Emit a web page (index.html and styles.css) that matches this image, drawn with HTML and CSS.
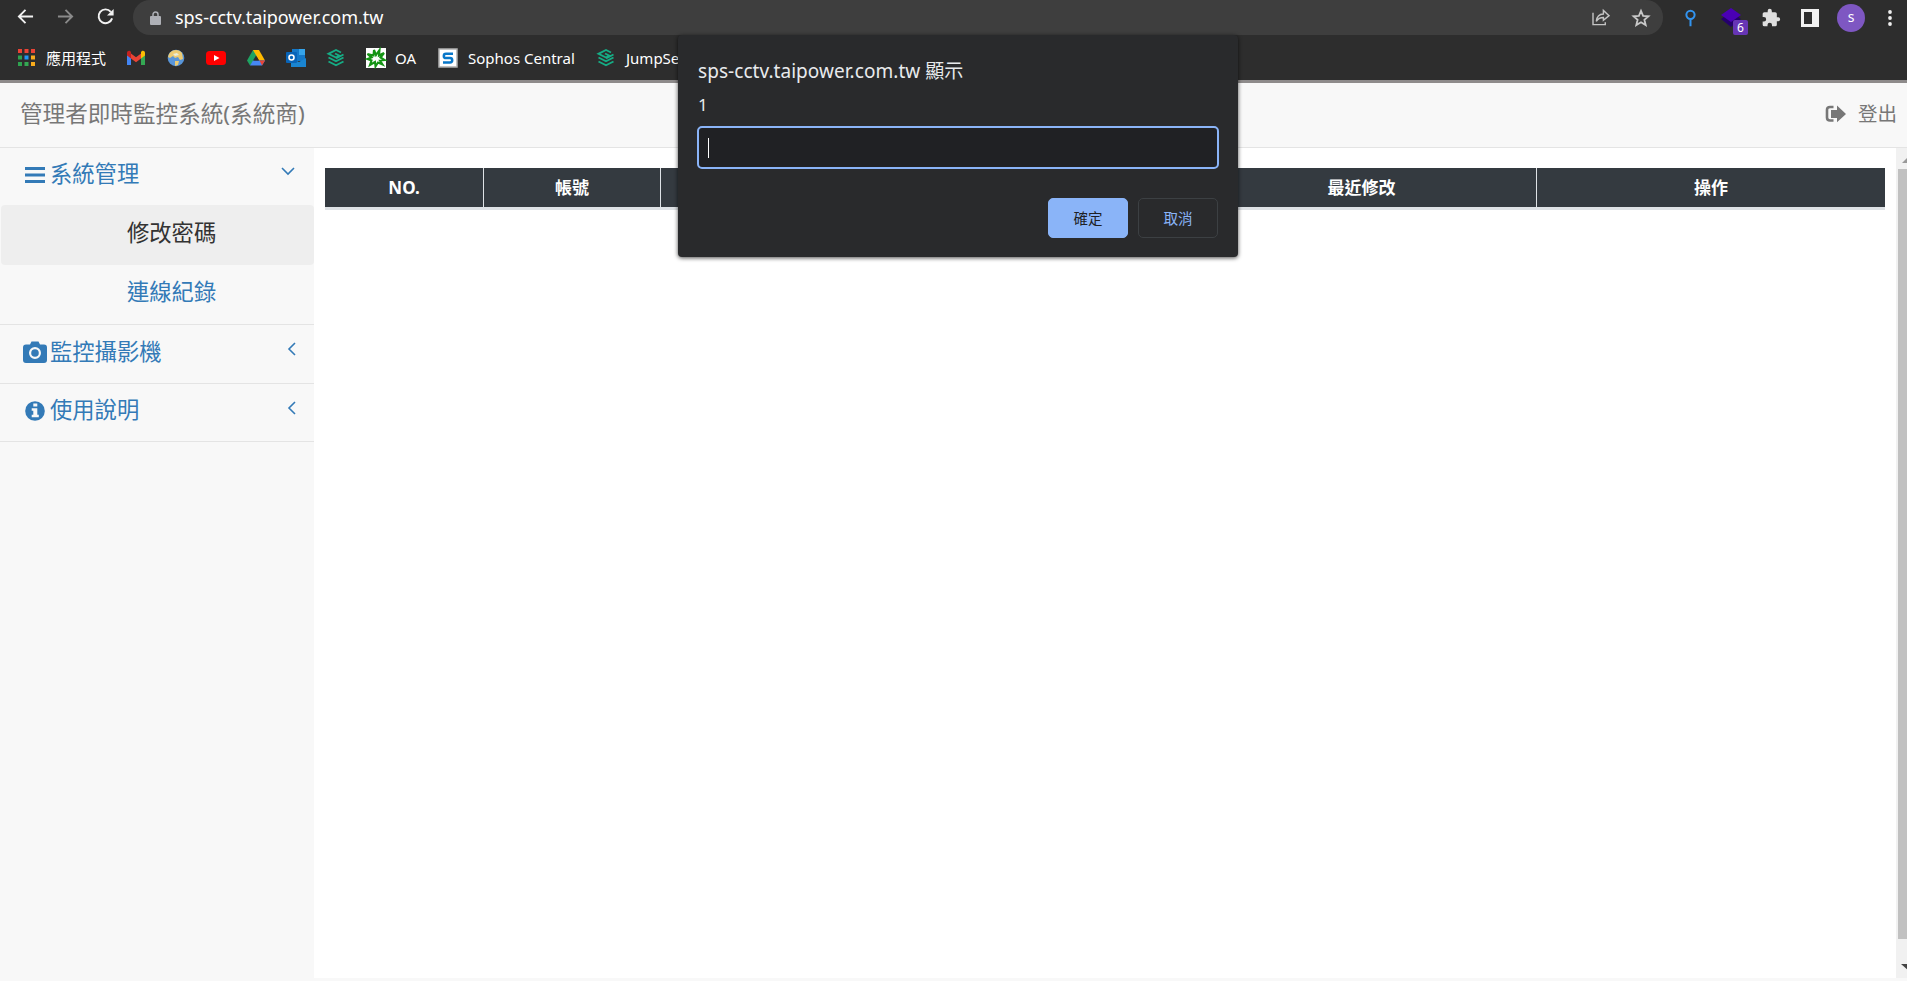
FILE: index.html
```html
<!DOCTYPE html>
<html lang="zh-Hant">
<head>
<meta charset="utf-8">
<title>sps-cctv.taipower.com.tw</title>
<link rel="stylesheet" href="styles.css">
</head>
<body>
<header class="chrome">
  <div class="toolbar">
    <svg class="nav-icon" viewBox="0 0 18 18"><path d="M17 9H2M9 2L2 9l7 7" fill="none" stroke="#f1f1f1" stroke-width="2"/></svg>
    <svg class="nav-icon" viewBox="0 0 18 18"><path d="M1 9h15M9 2l7 7-7 7" fill="none" stroke="#8a8a8a" stroke-width="2"/></svg>
    <svg class="nav-icon" viewBox="0 0 18 18"><path d="M14.6 4A7.3 7.3 0 1 0 16 11" fill="none" stroke="#f1f1f1" stroke-width="2.1"/><path d="M17.6 1v7h-7z" fill="#f1f1f1"/></svg>
    <div class="omnibox">
      <svg class="lock" viewBox="0 0 11 14"><path d="M3 6V3.6a2.5 2.5 0 0 1 5 0V6" fill="none" stroke="#aeb0b6" stroke-width="1.5"/><rect y="5" width="11" height="9" rx="1" fill="#aeb0b6"/></svg>
      <span class="url">sps-cctv.taipower.com.tw</span>
      <svg class="share" viewBox="0 0 20 18"><path d="M1 4v12.500h13V14M4.500 13C5 8 8 5.500 12 5.300V1.500l6 5.500-6 5V9c-3 0-5.500 1-7.500 4z" fill="none" stroke="#c4c4c4" stroke-width="1.500"/></svg>
      <svg class="star" viewBox="0 0 18 18"><path d="M9 1.800l2.100 5 5.400.5-4.100 3.500 1.300 5.300L9 13.200l-4.700 2.900 1.300-5.300-4.100-3.500 5.400-.5z" fill="none" stroke="#c8c8c8" stroke-width="1.800"/></svg>
    </div>
    <div class="extensions">
      <svg class="pin" viewBox="0 0 12 18"><circle cx="6" cy="5.500" r="4.500" fill="none" stroke="#3294f0" stroke-width="2.200"/><path d="M6 10v8" stroke="#3294f0" stroke-width="2.200"/></svg>
      <div class="layers"><svg viewBox="0 0 20 20"><path d="M0 11l10-7 10 7-10 8z" fill="#24006b"/><path d="M0 7l10-7 10 7-10 7z" fill="#4a00b4"/></svg><span class="count">6</span></div>
      <svg class="puzzle" viewBox="0 0 24 24"><path d="M20.500 11H19V7a2 2 0 0 0-2-2h-4V3.500a2.500 2.500 0 0 0-5 0V5H4a2 2 0 0 0-2 2v3.800h1.500a2.700 2.700 0 0 1 0 5.400H2V20a2 2 0 0 0 2 2h3.800v-1.500a2.700 2.700 0 0 1 5.400 0V22H17a2 2 0 0 0 2-2v-4h1.500a2.500 2.500 0 0 0 0-5z" fill="#dedede"/></svg>
      <svg class="panel" viewBox="0 0 18 18"><path d="M0 0h18v18H0zM3 3v12h8V3z" fill="#f1f1f1" fill-rule="evenodd"/></svg>
      <span class="avatar">s</span>
      <svg class="dots" viewBox="0 0 4 16"><circle cx="2" cy="2" r="1.900" fill="#eee"/><circle cx="2" cy="8" r="1.900" fill="#eee"/><circle cx="2" cy="14" r="1.900" fill="#eee"/></svg>
    </div>
  </div>
  <nav class="bookmarks">
    <svg class="apps" viewBox="0 0 17 17"><path d="M0 0h4v4H0zM6.500 0h4v4h-4zM13 0h4v4h-4z" fill="#ea4335"/><path d="M0 6.500h4v4H0zM0 13h4v4H0z" fill="#2ea24f"/><path d="M6.500 6.500h4v4h-4z" fill="#2196f3"/><path d="M6.500 13h4v4h-4z" fill="#34a853"/><path d="M13 6.500h4v4h-4zM13 13h4v4h-4z" fill="#f9ab1c"/></svg>
    <span class="bm-text apps-label">應用程式</span>
    <svg class="bm bm-gmail" viewBox="0 0 20 20"><path d="M1 5v12h4V8z" fill="#4285f4"/><path d="M19 5v12h-4V8z" fill="#34a853"/><path d="M5 5.500v5l5 3.800 5-3.800v-5l-5 3.800z" fill="#ea4335"/><path d="M1 5c0-2 2-2.700 3.300-1.700L5 4v6.500L1 7.500z" fill="#c5221f"/><path d="M19 5c0-2-2-2.700-3.300-1.700L15 4v6.500l4-3z" fill="#fbbc04"/></svg>
    <svg class="bm bm-globe" viewBox="0 0 20 20"><circle cx="10" cy="10" r="8.300" fill="#5895d9"/><path d="M3 6c3-5 10-5 13-1l1 6-3 1-2-3-3 1-2-2-3 2-2-1zM9 13h4l-1 4-3 1z" fill="#eccb73"/><path d="M7 6l4-1 2 2-4 1z" fill="#e8eddc"/></svg>
    <svg class="bm bm-youtube" viewBox="0 0 20 20"><rect y="3" width="20" height="14" rx="3.500" fill="#f00"/><path d="M8 7l5.500 3L8 13z" fill="#fff"/></svg>
    <svg class="bm bm-drive" viewBox="0 0 20 20"><path d="M7 2h3l2.500 5L4 17.500l-3-5z" fill="#1ea362"/><path d="M7 2h6l6 10.500h-6z" fill="#ffba00"/><path d="M7 12.500h12l-3 5H4z" fill="#4688f4"/><path d="M13.500 12.500H19l-3 5z" fill="#ea4335"/><path d="M10 7.500l3 5H7z" fill="#2d2d2d"/></svg>
    <svg class="bm bm-outlook" viewBox="0 0 20 20"><path d="M6 1h13v12H6z" fill="#1478c8"/><path d="M13 1h6v6h-6z" fill="#35a4ea"/><path d="M5 10l8 4 7-4v9H5z" fill="#1a85d1"/><rect y="4" width="11" height="11" rx="1" fill="#0864b8"/><circle cx="5.500" cy="9.500" r="2.500" fill="none" stroke="#fff" stroke-width="1.600"/></svg>
    <svg class="bm bm-stack" viewBox="0 0 20 20"><path d="M15 4.500L10 2 2.500 5.800 10 9.500l3.500-1.800L9 5.500M17.500 6.500L10 10.300M2.500 9.500l7.500 3.800 7.500-3.800M2.500 13.500l7.500 3.800 7.500-3.800" fill="none" stroke="#16ad85" stroke-width="1.900"/></svg>
    <svg class="bm bm-oa" viewBox="0 0 20 20"><path d="M0 0h20v20H0z" fill="#fff"/><path d="M8 2l2 5 3.500-5-.500 5.500L18 5l-3.500 4.500L18.500 12l-4.500.500 2.500 4-4.500-2-2.500 4-.500-4.500L4 17l1.500-4.500L1.500 11l4-1.500L1.500 6l6 1.500z" fill="none" stroke="#149414" stroke-width="2.100"/></svg>
    <span class="bm-text oa-label">OA</span>
    <svg class="bm bm-sophos" viewBox="0 0 20 20"><path d="M1 1h18v18H1z" fill="#fff" stroke="#b0b0b0" stroke-width="1.500"/><path d="M15 5.700H8Q5.800 5.700 5.800 7.900t2.200 2.200h4q2.200 0 2.200 2.200T12 14.500H5" fill="none" stroke="#0877c9" stroke-width="2.500"/></svg>
    <span class="bm-text sophos-label">Sophos Central</span>
    <svg class="bm bm-jump" viewBox="0 0 20 20"><path d="M15 4.500L10 2 2.500 5.800 10 9.500l3.500-1.800L9 5.500M17.500 6.500L10 10.300M2.500 9.500l7.500 3.800 7.500-3.800M2.500 13.500l7.500 3.800 7.500-3.800" fill="none" stroke="#16ad85" stroke-width="1.900"/></svg>
    <span class="bm-text jump-label">JumpServer</span>
  </nav>
</header>
<header class="site-header">
  <h1 class="brand">管理者即時監控系統(系統商)</h1>
  <a class="logout"><svg viewBox="0 0 22 18"><path d="M8.500 2H5Q2 2 2 5v7.500q0 3 3 3h3.500" fill="none" stroke="#777" stroke-width="2.600"/><path d="M6 5h6V.500L21 9l-9 8.300V13H6z" fill="#777"/></svg><span>登出</span></a>
</header>
<div class="layout">
  <aside class="sidebar">
    <a class="menu menu-open"><svg class="menu-icon" viewBox="0 0 24 24"><path d="M2 5.500h20M2 12h20M2 18.500h20" stroke="#337ab7" stroke-width="3.200"/></svg><span>系統管理</span><svg class="arrow arrow-down" viewBox="0 0 14 14"><path d="M1 4l6 6 6-6" fill="none" stroke="#337ab7" stroke-width="1.600"/></svg></a>
    <a class="sub sub-active">修改密碼</a>
    <a class="sub">連線紀錄</a>
    <a class="menu menu-camera"><svg class="menu-icon" viewBox="0 0 24 24"><path d="M3 4.500h4l1.500-3h7l1.500 3h4q3 0 3 3V20q0 3-3 3H3q-3 0-3-3V7.500q0-3 3-3zM12 7a6 6 0 1 0 0 12 6 6 0 0 0 0-12z" fill="#337ab7" fill-rule="evenodd"/><circle cx="12" cy="13" r="3.800" fill="#337ab7"/></svg><span>監控攝影機</span><svg class="arrow" viewBox="0 0 14 14"><path d="M10 1L4 7l6 6" fill="none" stroke="#337ab7" stroke-width="1.600"/></svg></a>
    <a class="menu menu-info"><svg class="menu-icon" viewBox="0 0 24 24"><circle cx="12" cy="12" r="9.800" fill="#337ab7"/><path d="M10.300 4.500h4v3h-4zM8.700 9.300h5.600v6.500h1.500v2.500H8.700v-2.500h1.600v-4H8.700z" fill="#f8f8f8"/></svg><span>使用說明</span><svg class="arrow" viewBox="0 0 14 14"><path d="M10 1L4 7l6 6" fill="none" stroke="#337ab7" stroke-width="1.600"/></svg></a>
  </aside>
  <main class="content">
    <table class="records">
      <colgroup><col class="c-no"><col class="c-user"><col class="c-hidden"><col class="c-date"><col class="c-action"></colgroup>
      <thead><tr><th>NO.</th><th>帳號</th><th></th><th>最近修改</th><th>操作</th></tr></thead>
    </table>
  </main>
  <div class="scrollbar">
    <div class="sb-button"><svg viewBox="0 0 11 21"><path d="M6 15l6-6v6z" fill="#999"/></svg></div>
    <div class="sb-thumb"></div>
    <div class="sb-button sb-bottom"><svg viewBox="0 0 11 39"><path d="M5 25h8v7z" fill="#444"/></svg></div>
  </div>
</div>
<div class="dialog">
  <h2 class="dialog-title">sps-cctv.taipower.com.tw 顯示</h2>
  <p class="dialog-message">1</p>
  <div class="prompt"><span class="caret"></span></div>
  <div class="actions"><button class="btn btn-ok">確定</button><button class="btn btn-cancel">取消</button></div>
</div>
</body>
</html>
```
FILE: styles.css
```css
* { box-sizing: border-box; }
body { margin: 0; width: 1907px; height: 981px; overflow: hidden; display: flex; flex-direction: column; position: relative; background: #f8f8f8; font-family: "Noto Sans", "Noto Sans CJK TC", sans-serif; }
svg { display: block; flex: none; overflow: visible; }

.chrome { flex: none; height: 83px; background: #2d2d2d; border-bottom: 3px solid #8e8b8b; color: #fff; }
.toolbar { height: 35px; display: flex; align-items: flex-start; padding-left: 17px; }
.nav-icon { width: 17px; height: 17px; margin: 8px 23px 0 0; }
.omnibox { width: 1530px; height: 35px; margin-left: -4px; padding: 0 13px 0 17px; border-radius: 17px; background: #3e3e3e; display: flex; align-items: center; }
.lock { width: 11px; height: 14px; }
.url { margin: 0 auto 2px 14px; font-size: 18px; line-height: 24px; letter-spacing: -0.050px; }
.share { width: 19px; height: 17px; margin-right: 21px; }
.star { width: 18px; height: 18px; }
.extensions { display: flex; align-items: center; height: 35px; }
.pin { width: 11px; height: 18px; margin-left: 22px; }
.layers { position: relative; width: 20px; height: 20px; margin-left: 25px; }
.count { position: absolute; left: 12px; top: 12px; width: 15px; height: 15px; border-radius: 2px; background: #6735b5; font-size: 12px; line-height: 15px; text-align: center; }
.puzzle { width: 20px; height: 20px; margin-left: 20px; }
.panel { width: 18px; height: 18px; margin-left: 20px; }
.avatar { width: 28px; height: 28px; margin-left: 18px; border-radius: 50%; background: #7e57c2; font-size: 14px; line-height: 26px; text-align: center; }
.dots { width: 4px; height: 16px; margin-left: 23px; }

.bookmarks { height: 45px; display: flex; align-items: center; padding-left: 18px; }
.bm { width: 20px; height: 20px; }
.apps { width: 17px; height: 17px; }
.bm-text { font-size: 15px; line-height: 20px; white-space: nowrap; }
.apps-label { width: 60px; margin: 0 20px 0 11px; }
.bm-globe, .bm-youtube, .bm-drive, .bm-outlook, .bm-stack, .bm-oa { margin-left: 20px; }
.oa-label { width: 23px; margin: 0 20px 0 9px; }
.sophos-label { width: 108px; margin: 0 20px 0 10px; }
.jump-label { margin-left: 10px; }

.site-header { flex: none; height: 65px; border-bottom: 1px solid #e4e4e4; display: flex; justify-content: space-between; padding: 16px 10px 0 20px; color: #777; }
.brand { margin: 0; font-size: 22.600px; line-height: 30px; font-weight: 400; }
.logout { display: flex; gap: 11px; font-size: 19.500px; line-height: 30px; }
.logout svg { width: 22px; height: 18px; margin-top: 6px; }

.layout { flex: 1; min-height: 0; display: flex; padding-bottom: 3px; }
.sidebar { width: 314px; color: #337ab7; font-size: 22.300px; line-height: 30px; }
.menu { display: flex; height: 59px; padding: 12px 18px 0 23px; border-bottom: 1px solid #e4e4e4; }
.menu span { margin-left: 3px; }
.menu-open { height: 57px; padding-top: 11px; border: 0; }
.menu-icon { width: 24px; height: 24px; margin-top: 4px; }
.menu-camera .menu-icon { margin-top: 3px; }
.arrow { width: 14px; height: 14px; margin: 6px -3px 0 auto; }
.menu-camera .arrow { margin-top: 5px; }
.arrow-down { margin: 5px 1px 0 auto; }
.menu-info { height: 58px; padding-top: 11px; }
.sub { display: block; height: 60px; padding: 13px 0 0 126px; margin-left: 1px; }
.sub-active { background: #eee; border-radius: 4px; color: #333; }
.sub:not(.sub-active) { border-bottom: 1px solid #e4e4e4; margin-left: 0; padding: 12px 0 0 127px; }

.content { flex: 1; background: #fff; padding: 20px 11px 0 11px; }
.records { width: 1560px; table-layout: fixed; border-collapse: separate; border-spacing: 0; border-bottom: 3px solid #dee2e6; }
.records th { height: 39px; padding: 0; background: #343a40; border-right: 1px solid #dee2e6; color: #fff; font-size: 17px; line-height: 24px; font-weight: 700; }
.records th:last-child { border-right: 0; }
.c-no { width: 159px; }
.c-user { width: 177px; }
.c-hidden { width: 526px; }
.c-date { width: 350px; }
.c-action { width: 348px; }

.scrollbar { width: 11px; background: #f1f1f1; display: flex; flex-direction: column; }
.sb-button { height: 21px; }
.sb-button svg { width: 11px; height: 100%; overflow: hidden; }
.sb-thumb { flex: 1; margin-left: 2px; background: #c1c1c1; }
.sb-bottom { height: 39px; }

.dialog { position: absolute; left: 678px; top: 35px; width: 560px; height: 222px; padding: 22px 20px 0 20px; border-radius: 4px; background: #292a2c; box-shadow: 0 1px 4px rgba(0,0,0,.7); color: #e8eaed; }
.dialog-title { margin: 0; font-size: 19px; line-height: 28px; font-weight: 400; letter-spacing: .050px; }
.dialog-message { margin: 8px 0 0; font-size: 17px; line-height: 24px; }
.prompt { height: 43px; margin: 9px 0 29px -1px; width: 522px; border: 2px solid #8ab4f8; border-radius: 5px; background: #202124; padding: 10px 9px; }
.caret { display: block; width: 1px; height: 20px; background: #fff; }
.actions { display: flex; justify-content: flex-end; gap: 10px; }
.btn { width: 80px; height: 40px; padding: 0; border: 1px solid #3c4043; border-radius: 5px; background: transparent; color: #8ab4f8; font: 14.500px/20px "Noto Sans", "Noto Sans CJK TC", sans-serif; }
.btn-ok { background: #8ab4f8; border-color: #8ab4f8; color: #202124; }
```
